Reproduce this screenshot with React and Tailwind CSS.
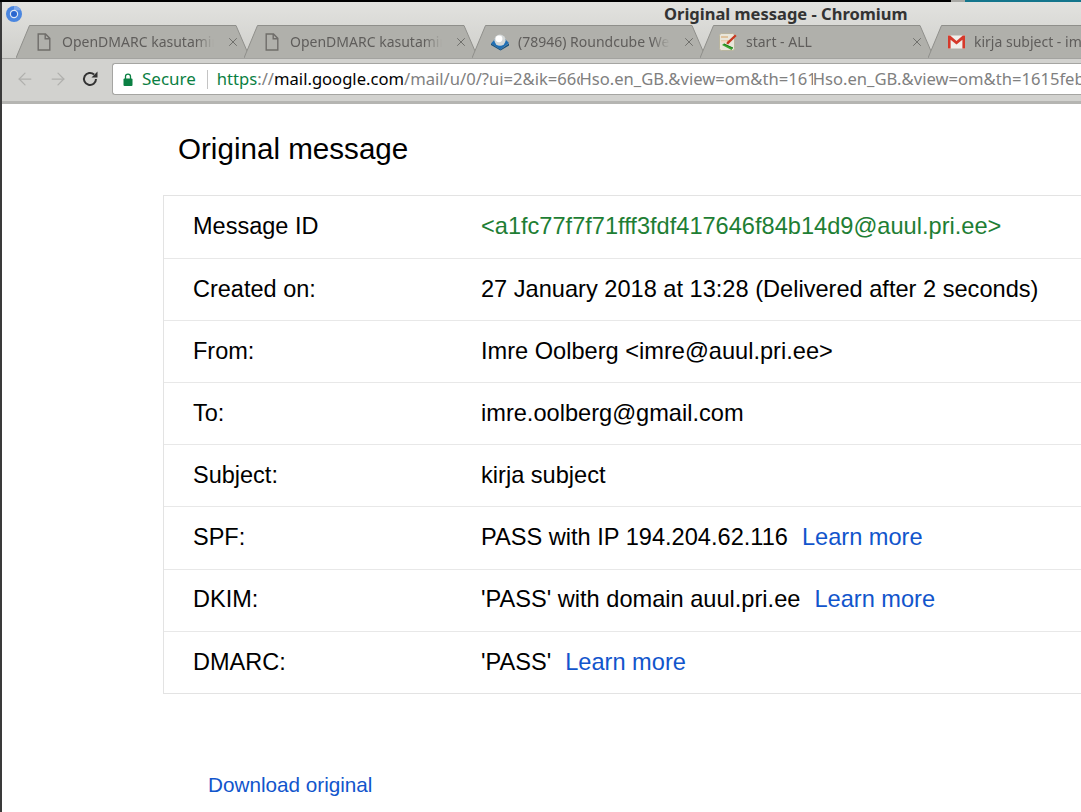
import React from 'react'
import { ArrowLeft, ArrowRight, X } from 'lucide-react'

const DocIcon = () => (
    <svg width="14" height="18" viewBox="0 0 14 18" fill="none" stroke="#6f6d6a" strokeWidth="1.4">
        <path d="M1.2 1h7.3l4.3 4.4V17H1.2z" />
        <path d="M8.2 1v4.7h4.6" />
    </svg>
)

const RoundcubeIcon = () => (
    <svg width="20" height="18" viewBox="0 0 20 18">
        <path d="M1 10.5 5 6l10 0 4 4-8.5 6.5z" fill="#1f6fb5" />
        <path d="M1 10.5 10.5 16.5 19 10.5v2l-8.5 5L1 12z" fill="#14507f" />
        <circle cx="10" cy="7.2" r="5.6" fill="#d4d8d8" />
        <circle cx="9" cy="5.8" r="3.4" fill="#ffffff" />
    </svg>
)

const WikiIcon = () => (
    <svg width="20" height="20" viewBox="0 0 20 20">
        <rect x="1.5" y="1.5" width="15" height="17" rx="2" fill="#e9e6da" stroke="#b9b59f" />
        <path d="M3 9h9M3 5h7" stroke="#d8a060" strokeWidth="1.2" />
        <path d="M8 11 17 2.5l1.6 1.6L10 12.5z" fill="#c8381f" />
        <path d="M3 8.5h6v2H3z" fill="#f4d9c4" />
        <path d="M4 13l2-1.5 9 4.5-1.5 2z" fill="#3aa52f" />
        <path d="M6 12l9 4" stroke="#1f7a1c" strokeWidth="1" />
    </svg>
)

const GmailIcon = () => (
    <svg width="17" height="14" viewBox="0 0 17 14">
        <rect x="0" y="0.5" width="17" height="13" fill="#f1efec" />
        <path d="M0 .5h2.2L8.5 6l6.3-5.5H17v13h-2.6V4.8L8.5 9.6 2.6 4.8v8.7H0z" fill="#d6392b" />
    </svg>
)

const ChromiumLogo = () => (
    <svg width="16" height="16" viewBox="0 0 16 16">
        <circle cx="8" cy="8" r="8" fill="#4a86e0" />
        <path d="M8 0a8 8 0 0 1 7 4.2H8z" fill="#7fa9ea" />
        <circle cx="8" cy="8" r="4.2" fill="#dfe7f3" />
        <circle cx="8" cy="8" r="3" fill="#2a66cf" />
    </svg>
)

const tabs = [
    { title: 'OpenDMARC kasutamine', icon: <DocIcon /> },
    { title: 'OpenDMARC kasutamine', icon: <DocIcon /> },
    { title: '(78946) Roundcube Webmail', icon: <RoundcubeIcon /> },
    { title: 'start - ALL', icon: <WikiIcon /> },
    { title: 'kirja subject - imre.oolberg', icon: <GmailIcon /> },
]

const Tab = ({ tab }) => (
    <div className="relative h-[33px] w-[236px] shrink-0 -mr-[8px]">
        <svg className="absolute inset-0" width="236" height="33" viewBox="0 0 236 33">
            <path d="M0 33 13.5 .5H220L234 33" fill="#b0b0ab" stroke="#8f8f8b" strokeWidth="1" />
        </svg>
        <div className="relative flex h-full items-center pl-[16px] pr-[12px]">
            <div className="flex w-[24px] shrink-0 items-center justify-center">{tab.icon}</div>
            <div className="ml-[6px] w-[152px] overflow-hidden whitespace-nowrap text-[14px] text-[#5f5d5b] [mask-image:linear-gradient(to_right,black_88%,transparent)]">
                {tab.title}
            </div>
            <X size={14} strokeWidth={1.6} className="ml-auto text-[#6a6a67]" />
        </div>
    </div>
)

const rows = [
    { label: 'Message ID', value: '<a1fc77f7f71fff3fdf417646f84b14d9@auul.pri.ee>', green: true },
    { label: 'Created on:', value: '27 January 2018 at 13:28 (Delivered after 2 seconds)' },
    { label: 'From:', value: 'Imre Oolberg <imre@auul.pri.ee>' },
    { label: 'To:', value: 'imre.oolberg@gmail.com' },
    { label: 'Subject:', value: 'kirja subject' },
    { label: 'SPF:', value: 'PASS with IP 194.204.62.116', link: true },
    { label: 'DKIM:', value: "'PASS' with domain auul.pri.ee", link: true },
    { label: 'DMARC:', value: "'PASS'", link: true },
]

export default function App() {
    return (
        <div className="flex h-[812px] w-[1081px] flex-col overflow-hidden bg-white font-['Noto_Sans',sans-serif]">
            {/* desktop panel strip */}
            <div className="flex h-[2px] shrink-0">
                <div className="w-[951px] bg-black" />
                <div className="w-[14px] bg-[#a8a8a4]" />
                <div className="flex-1 bg-[#13758c]" />
            </div>

            <div className="flex min-h-0 flex-1 border-l-2 border-[#3a3a3a]">
                <div className="flex min-w-0 flex-1 flex-col">
                    {/* title bar + tabs */}
                    <div className="h-[57px] shrink-0 border-b border-[#a3a3a0] bg-gradient-to-b from-[#e2e2df] to-[#cfcfcb]">
                        <div className="relative h-[23px]">
                            <div className="absolute left-[4px] top-[4px]"><ChromiumLogo /></div>
                            <div className="pl-[662px] pt-[1px] text-[16.5px] font-bold leading-[21px] text-[#333333]">
                                Original message - Chromium
                            </div>
                        </div>
                        <div className="flex overflow-hidden pl-[14px]">
                            {tabs.map((tab, i) => <Tab key={i} tab={tab} />)}
                        </div>
                    </div>

                    {/* toolbar */}
                    <div className="flex h-[45px] shrink-0 items-center border-b-[3px] border-[#b5b5b2] bg-[#d2d2cf] pb-[2px]">
                        <ArrowLeft size={20} strokeWidth={1.5} className="ml-[13px] text-[#b0b0ad]" />
                        <ArrowRight size={20} strokeWidth={1.5} className="ml-[13px] text-[#b0b0ad]" />
                        <svg className="ml-[13px]" width="18" height="18" viewBox="0 0 18 18" fill="none">
                            <path d="M15 9a6 6 0 1 1-1.9-4.4" stroke="#333333" strokeWidth="2" />
                            <path d="M16.5 1.5v6h-6z" fill="#333333" />
                        </svg>
                        <div className="ml-[13px] flex h-[32px] flex-1 items-center overflow-hidden rounded-l-[3px] border border-r-0 border-[#a5a5a2] bg-white pl-[10px]">
                            <svg className="shrink-0" width="10" height="13" viewBox="0 0 10 13">
                                <path d="M2.5 6V3.6a2.5 2.5 0 0 1 5 0V6" fill="none" stroke="#0b8043" strokeWidth="1.3" />
                                <rect x="0.5" y="5.5" width="9" height="7.5" rx="1" fill="#0b8043" />
                            </svg>
                            <span className="ml-[9px] text-[17px] text-[#0b8043]">Secure</span>
                            <div className="ml-[11px] h-[19px] w-px shrink-0 bg-[#c4c4c4]" />
                            <div className="ml-[9px] whitespace-nowrap text-[16.6px] text-[#808080]">
                                <span className="text-[#0b8043]">https</span>://<span className="text-black">mail.google.com</span>/mail/u/0/?ui=2&amp;ik=66d<span className="relative -ml-[7px] bg-white">Hso.en_GB.&amp;view=om&amp;th=161</span><span className="relative -ml-[4px] bg-white">Hso.en_GB.&amp;view=om&amp;th=1615feb</span>
                            </div>
                        </div>
                    </div>

                    {/* page */}
                    <div className="min-h-0 flex-1 font-['Liberation_Sans',sans-serif] text-black">
                        <h1 className="pl-[176px] pt-[26px] text-[29.6px] leading-[38px]">Original message</h1>
                        <div className="ml-[161px] mt-[27px] border-y border-l border-[#e3e3e3]">
                            {rows.map((row, i) => (
                                <div key={row.label} className={`flex h-[62.1px] items-center text-[23.5px] ${i > 0 ? 'border-t border-[#e8e8e8]' : ''}`}>
                                    <div className="w-[317px] shrink-0 pl-[29px]">{row.label}</div>
                                    <div className={`whitespace-nowrap text-[23.6px] ${row.green ? 'text-[#1e7e34]' : ''}`}>
                                        {row.value}
                                        {row.link && <a className="ml-[14px] text-[#1155cc]">Learn more</a>}
                                    </div>
                                </div>
                            ))}
                        </div>
                        <a className="mt-[75px] block pl-[206px] text-[20.7px] text-[#1155cc]">Download original</a>
                    </div>
                </div>
            </div>
        </div>
    )
}
